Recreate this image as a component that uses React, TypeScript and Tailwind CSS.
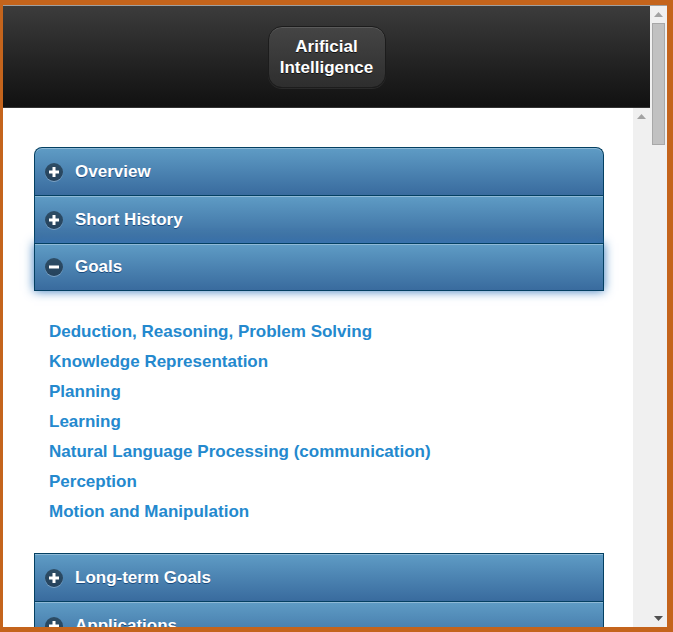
import React from "react";

function Icon({ minus }: { minus?: boolean }) {
  return (
    <span className="w-[18px] h-[18px] rounded-full bg-[rgba(0,0,0,0.45)] flex items-center justify-center shrink-0 shadow-[0_1px_0_rgba(255,255,255,0.3)]">
      <svg width="12" height="12" viewBox="0 0 12 12">
        <rect x="1" y="4.5" width="10" height="3" fill="#fff" />
        {!minus && <rect x="4.5" y="1" width="3" height="10" fill="#fff" />}
      </svg>
    </span>
  );
}

function Head({
  title,
  minus,
  first,
  last,
  glow,
}: {
  title: string;
  minus?: boolean;
  first?: boolean;
  last?: boolean;
  glow?: boolean;
}) {
  return (
    <div
      className={
        "relative h-[48px] flex items-center pl-[10px] border-x border-t border-[#044062] bg-gradient-to-b from-[#5f9cc5] to-[#396b9e] text-white font-bold text-[17px] [text-shadow:0_1px_0_#194b7e] " +
        (first ? "rounded-t-[8px] " : "") +
        (last ? "border-b " : "") +
        (glow
          ? "z-10 shadow-[inset_0_1px_0_rgba(255,255,255,0.3),0_0_10px_#387bbe]"
          : "shadow-[inset_0_1px_0_rgba(255,255,255,0.3)]")
      }
    >
      <Icon minus={minus} />
      <span className="ml-[12px]">{title}</span>
    </div>
  );
}

function UpArrow({ color }: { color: string }) {
  return (
    <svg width="9" height="5" viewBox="0 0 9 5">
      <polygon points="0,5 9,5 4.5,0" fill={color} />
    </svg>
  );
}

export default function App() {
  const links = [
    "Deduction, Reasoning, Problem Solving",
    "Knowledge Representation",
    "Planning",
    "Learning",
    "Natural Language Processing (communication)",
    "Perception",
    "Motion and Manipulation",
  ];
  return (
    <div className="w-[673px] h-[632px] bg-[#c4641c] pt-[5px] pl-[3px] pr-[6px] pb-[5px] flex flex-col overflow-hidden font-['Liberation_Sans',Arial,sans-serif]">
      <div className="flex-1 flex min-h-0 border-t border-[#a0a0a0]">
        <div className="w-[647px] flex flex-col min-h-0">
          <div className="h-[102px] shrink-0 bg-gradient-to-b from-[#3c3c3c] to-[#111111] border-b border-[#333] flex items-center justify-center">
            <div className="w-[118px] h-[62px] rounded-[14px] border border-[#1c1c1c] bg-gradient-to-b from-[#454545] to-[#2e2e2e] shadow-[inset_0_1px_0_rgba(255,255,255,0.12),0_1px_0_rgba(255,255,255,0.08)] flex items-center justify-center text-center text-white font-bold text-[17px] leading-[21px] [text-shadow:0_1px_0_#111]">
              Arificial
              <br />
              Intelligence
            </div>
          </div>
          <div className="flex-1 flex min-h-0">
            <div className="w-[630px] bg-white overflow-hidden pt-[39px]">
              <div className="ml-[31px] w-[570px]">
                <Head title="Overview" first />
                <Head title="Short History" />
                <Head title="Goals" minus last glow />
                <div className="pt-[26px] pb-[26px] pl-[15px]">
                  {links.map((l) => (
                    <div
                      key={l}
                      className="text-[#2489ce] font-bold text-[17px] leading-[30px]"
                    >
                      {l}
                    </div>
                  ))}
                </div>
                <Head title="Long-term Goals" />
                <Head title="Applications" />
              </div>
            </div>
            <div className="w-[17px] bg-[#f0f0f0] flex flex-col items-center">
              <div className="h-[17px] flex items-center justify-center">
                <UpArrow color="#a3a3a3" />
              </div>
            </div>
          </div>
        </div>
        <div className="w-[17px] bg-[#f0f0f0] flex flex-col items-center">
          <div className="h-[17px] flex items-center justify-center">
            <UpArrow color="#a3a3a3" />
          </div>
          <div className="w-[13px] h-[122px] bg-[#c1c1c1] border border-[#a8a8a8]" />
          <div className="flex-1" />
          <div className="h-[17px] flex items-center justify-center">
            <svg width="9" height="5" viewBox="0 0 9 5">
              <polygon points="0,0 9,0 4.5,5" fill="#505050" />
            </svg>
          </div>
        </div>
      </div>
    </div>
  );
}
